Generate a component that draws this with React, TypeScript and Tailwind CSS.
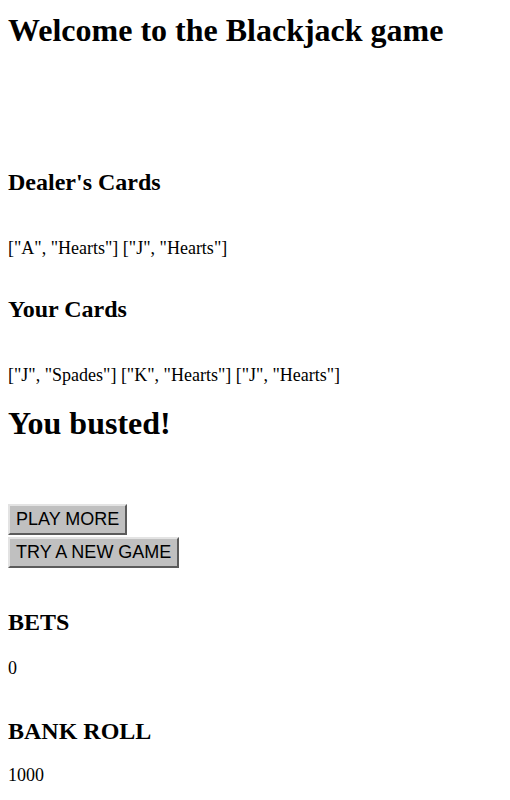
const serif = "font-['Liberation_Serif','Times_New_Roman',serif]";

function GameButton({ label }: { label: string }) {
  return (
    <button
      className="block h-[31px] border-2 border-t-[#e3e3e3] border-l-[#e3e3e3] border-r-[#5b5b5b] border-b-[#5b5b5b] bg-[#c0c0c0] px-[6px] font-['Liberation_Sans',Arial,sans-serif] text-[18px] leading-[27px] text-black"
      type="button"
    >
      {label}
    </button>
  );
}

export default function App() {
  const dealer = [
    ["A", "Hearts"],
    ["J", "Hearts"],
  ];
  const player = [
    ["J", "Spades"],
    ["K", "Hearts"],
    ["J", "Hearts"],
  ];
  const show = (cards: string[][]) =>
    cards.map((c) => `["${c[0]}", "${c[1]}"]`).join(" ");

  return (
    <div className={`${serif} min-h-[800px] bg-white px-2 text-black`}>
      <h1 className="pt-[12px] text-[32px] font-bold leading-[37px]">
        Welcome to the Blackjack game
      </h1>

      <h3 className="mt-[119px] text-[24px] font-bold leading-[28px]">
        Dealer&apos;s Cards
      </h3>
      <p className="mt-[41px] text-[18px] leading-[22px]">{show(dealer)}</p>

      <h3 className="mt-[36px] text-[24px] font-bold leading-[28px]">
        Your Cards
      </h3>
      <p className="mt-[41px] text-[18px] leading-[22px]">{show(player)}</p>

      <h2 className="mt-[19px] text-[32px] font-bold leading-[37px]">
        You busted!
      </h2>

      <div className="mt-[62px] flex flex-col items-start gap-[2px]">
        <GameButton label="PLAY MORE" />
        <GameButton label="TRY A NEW GAME" />
      </div>

      <h3 className="mt-[40px] text-[24px] font-bold leading-[28px]">BETS</h3>
      <p className="mt-[21px] text-[18px] leading-[22px]">0</p>

      <h3 className="mt-[38px] text-[24px] font-bold leading-[28px]">
        BANK ROLL
      </h3>
      <p className="mt-[19px] text-[18px] leading-[22px]">1000</p>
    </div>
  );
}
